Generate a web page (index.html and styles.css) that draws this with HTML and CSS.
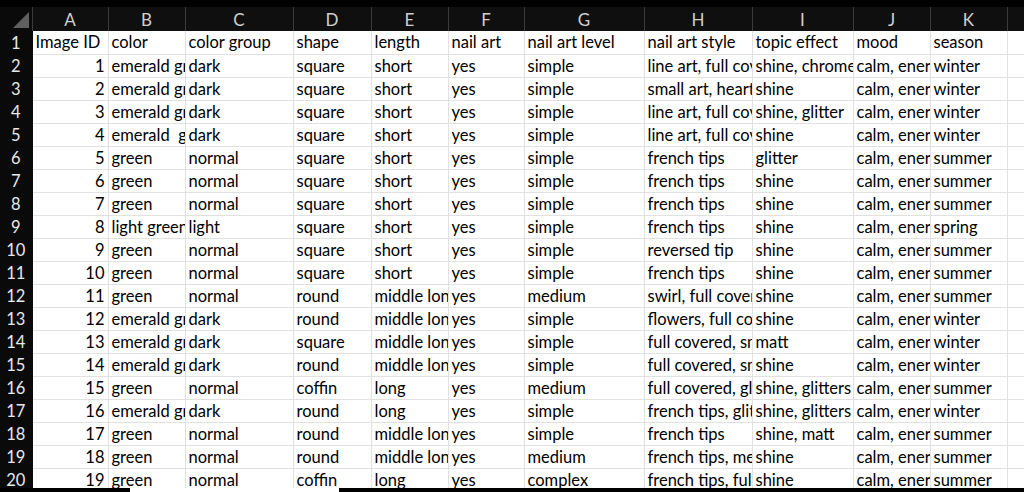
FILE: index.html
```html
<!DOCTYPE html>
<html lang="en">
<head>
    <meta charset="UTF-8">
    <title>nails.xlsx</title>
    <link rel="stylesheet" href="styles.css">
</head>
<body>
    <div class="sheet">
        <div class="top-band"></div>
        <table class="grid">
            <colgroup>
                <col class="c-rownum"><col class="c-a"><col class="c-b"><col class="c-c"><col class="c-d"><col class="c-e">
                <col class="c-f"><col class="c-g"><col class="c-h"><col class="c-i"><col class="c-j"><col class="c-k"><col class="c-l">
            </colgroup>
            <thead>
                <tr>
                    <th class="corner"><svg width="18" height="18" viewBox="0 0 18 18"><polygon points="17,1 17,17 1,17" fill="#5f5f5f"/></svg></th>
                    <th>A</th><th>B</th><th>C</th><th>D</th><th>E</th><th>F</th><th>G</th><th>H</th><th>I</th><th>J</th><th>K</th><th></th>
                </tr>
            </thead>
            <tbody>
                <tr><th>1</th><td>Image ID</td><td>color</td><td>color group</td><td>shape</td><td>length</td><td>nail art</td><td>nail art level</td><td>nail art style</td><td>topic effect</td><td>mood</td><td>season</td><td></td></tr>
                <tr><th>2</th><td class="num">1</td><td>emerald green</td><td>dark</td><td>square</td><td>short</td><td>yes</td><td>simple</td><td>line art, full covered</td><td>shine, chrome</td><td>calm, energetic</td><td>winter</td><td></td></tr>
                <tr><th>3</th><td class="num">2</td><td>emerald green</td><td>dark</td><td>square</td><td>short</td><td>yes</td><td>simple</td><td>small art, hearts</td><td>shine</td><td>calm, energetic</td><td>winter</td><td></td></tr>
                <tr><th>4</th><td class="num">3</td><td>emerald green</td><td>dark</td><td>square</td><td>short</td><td>yes</td><td>simple</td><td>line art, full covered</td><td>shine, glitter</td><td>calm, energetic</td><td>winter</td><td></td></tr>
                <tr><th>5</th><td class="num">4</td><td>emerald  green</td><td>dark</td><td>square</td><td>short</td><td>yes</td><td>simple</td><td>line art, full covered</td><td>shine</td><td>calm, energetic</td><td>winter</td><td></td></tr>
                <tr><th>6</th><td class="num">5</td><td>green</td><td>normal</td><td>square</td><td>short</td><td>yes</td><td>simple</td><td>french tips</td><td>glitter</td><td>calm, energetic</td><td>summer</td><td></td></tr>
                <tr><th>7</th><td class="num">6</td><td>green</td><td>normal</td><td>square</td><td>short</td><td>yes</td><td>simple</td><td>french tips</td><td>shine</td><td>calm, energetic</td><td>summer</td><td></td></tr>
                <tr><th>8</th><td class="num">7</td><td>green</td><td>normal</td><td>square</td><td>short</td><td>yes</td><td>simple</td><td>french tips</td><td>shine</td><td>calm, energetic</td><td>summer</td><td></td></tr>
                <tr><th>9</th><td class="num">8</td><td>light green</td><td>light</td><td>square</td><td>short</td><td>yes</td><td>simple</td><td>french tips</td><td>shine</td><td>calm, energetic</td><td>spring</td><td></td></tr>
                <tr><th>10</th><td class="num">9</td><td>green</td><td>normal</td><td>square</td><td>short</td><td>yes</td><td>simple</td><td>reversed tip</td><td>shine</td><td>calm, energetic</td><td>summer</td><td></td></tr>
                <tr><th>11</th><td class="num">10</td><td>green</td><td>normal</td><td>square</td><td>short</td><td>yes</td><td>simple</td><td>french tips</td><td>shine</td><td>calm, energetic</td><td>summer</td><td></td></tr>
                <tr><th>12</th><td class="num">11</td><td>green</td><td>normal</td><td>round</td><td>middle long</td><td>yes</td><td>medium</td><td>swirl, full covered</td><td>shine</td><td>calm, energetic</td><td>summer</td><td></td></tr>
                <tr><th>13</th><td class="num">12</td><td>emerald green</td><td>dark</td><td>round</td><td>middle long</td><td>yes</td><td>simple</td><td>flowers, full covered</td><td>shine</td><td>calm, energetic</td><td>winter</td><td></td></tr>
                <tr><th>14</th><td class="num">13</td><td>emerald green</td><td>dark</td><td>square</td><td>middle long</td><td>yes</td><td>simple</td><td>full covered, small art</td><td>matt</td><td>calm, energetic</td><td>winter</td><td></td></tr>
                <tr><th>15</th><td class="num">14</td><td>emerald green</td><td>dark</td><td>round</td><td>middle long</td><td>yes</td><td>simple</td><td>full covered, small art</td><td>shine</td><td>calm, energetic</td><td>winter</td><td></td></tr>
                <tr><th>16</th><td class="num">15</td><td>green</td><td>normal</td><td>coffin</td><td>long</td><td>yes</td><td>medium</td><td>full covered, glitter</td><td>shine, glitters</td><td>calm, energetic</td><td>summer</td><td></td></tr>
                <tr><th>17</th><td class="num">16</td><td>emerald green</td><td>dark</td><td>round</td><td>long</td><td>yes</td><td>simple</td><td>french tips, glitter</td><td>shine, glitters</td><td>calm, energetic</td><td>winter</td><td></td></tr>
                <tr><th>18</th><td class="num">17</td><td>green</td><td>normal</td><td>round</td><td>middle long</td><td>yes</td><td>simple</td><td>french tips</td><td>shine, matt</td><td>calm, energetic</td><td>summer</td><td></td></tr>
                <tr><th>19</th><td class="num">18</td><td>green</td><td>normal</td><td>round</td><td>middle long</td><td>yes</td><td>medium</td><td>french tips, metallic</td><td>shine</td><td>calm, energetic</td><td>summer</td><td></td></tr>
                <tr><th>20</th><td class="num">19</td><td>green</td><td>normal</td><td>coffin</td><td>long</td><td>yes</td><td>complex</td><td>french tips, full covered</td><td>shine</td><td>calm, energetic</td><td>summer</td><td></td></tr>
            </tbody>
        </table>
    </div>
    <div class="bottom-bar">
        <div class="bar-left"></div>
        <div class="bar-gap"></div>
        <div class="bar-right"></div>
    </div>
</body>
</html>
```

FILE: styles.css
```css
body {
    margin: 0;
    padding: 0;
    width: 1024px;
    height: 492px;
    overflow: hidden;
    background: #fff;
    font-family: Lato, "Open Sans", sans-serif;
}
.sheet {
    height: 488px;
    overflow: hidden;
}
.top-band {
    height: 7px;
    background: #000;
}
.grid {
    border-collapse: collapse;
    table-layout: fixed;
    width: 1084px;
    font-size: 16.5px;
}
.c-rownum { width: 32px; }
.c-a { width: 76px; }
.c-b { width: 77px; }
.c-c { width: 108px; }
.c-d { width: 78px; }
.c-e { width: 77px; }
.c-f { width: 76px; }
.c-g { width: 120px; }
.c-h { width: 108px; }
.c-i { width: 101px; }
.c-j { width: 77px; }
.c-k { width: 77px; }
.c-l { width: 77px; }

thead th {
    height: 24px;
    padding: 0;
    background: #0f0f0f;
    color: #cfcfcf;
    font-weight: normal;
    font-size: 17px;
    text-align: center;
    border-right: 1px solid #3a3a3a;
    box-sizing: border-box;
}
thead th.corner {
    background: #0a0a0a;
    text-align: right;
    vertical-align: bottom;
    padding: 0 2px 2px 0;
    line-height: 0;
}
tbody th {
    height: 23px;
    padding: 0;
    background: #0a0a0a;
    color: #e8e8e8;
    font-weight: normal;
    text-align: center;
    border-right: 1px solid #0a0a0a;
}
tbody td {
    height: 23px;
    padding: 0 3px 0 3px;
    color: #000;
    white-space: pre;
    overflow: hidden;
    text-overflow: clip;
    border-right: 1px solid #e1e1e1;
    border-bottom: 1px solid #e1e1e1;
    box-sizing: border-box;
    vertical-align: middle;
}
tbody td.num {
    text-align: right;
}
.bottom-bar {
    display: flex;
    height: 4px;
}
.bar-left {
    width: 130px;
    background: #000;
}
.bar-gap {
    width: 209px;
    background: #fff;
}
.bar-right {
    flex: 1;
    background: #000;
}
```
